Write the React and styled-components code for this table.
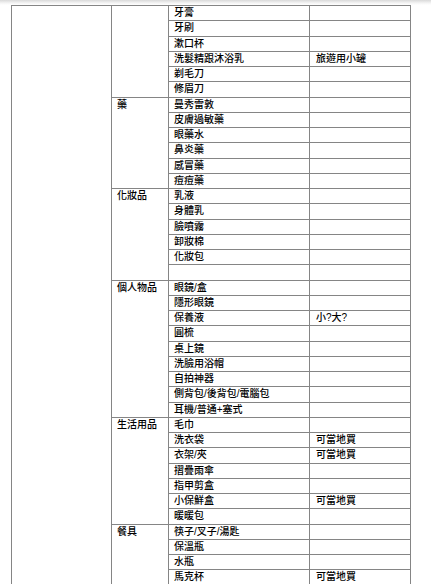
import React from "react"
import styled, { createGlobalStyle } from "styled-components"

const GlobalStyle = createGlobalStyle`
  html, body {
    margin: 0;
    padding: 0;
    background: #ffffff;
  }
  body {
    font-family: "Liberation Sans", "Noto Sans CJK TC", sans-serif;
    color: #000000;
    overflow: hidden;
  }
`

const Page = styled.div`
  width: 431px;
  height: 584px;
  overflow: hidden;
  background: #ffffff;
`

const TopShade = styled.div`
  height: 5px;
  background: linear-gradient(to bottom, #d9d9d9, #f4f4f4 60%, #ffffff);
`

const Sheet = styled.table`
  margin-left: 11px;
  width: 399px;
  table-layout: fixed;
  border-collapse: collapse;
  font-size: 10px;
  font-weight: 500;
`

const Row = styled.tr`
  height: 15.26px;
`

const Cell = styled.td`
  border: 1px solid #858585;
  padding: 0 0 0 ${props => props.$pad || 5}px;
  height: 14.26px;
  line-height: 14px;
  white-space: nowrap;
  overflow: hidden;
  vertical-align: ${props => (props.$top ? "top" : "middle")};
`

const groups = [
  {
    name: "",
    items: [
      ["牙膏"],
      ["牙刷"],
      ["漱口杯"],
      ["洗髮精跟沐浴乳", "旅遊用小罐"],
      ["剃毛刀"],
      ["修眉刀"]
    ]
  },
  {
    name: "藥",
    items: [["曼秀雷敦"], ["皮膚過敏藥"], ["眼藥水"], ["鼻炎藥"], ["感冒藥"], ["痘痘藥"]]
  },
  {
    name: "化妝品",
    items: [["乳液"], ["身體乳"], ["臉噴霧"], ["卸妝棉"], ["化妝包"], [""]]
  },
  {
    name: "個人物品",
    items: [
      ["眼鏡/盒"],
      ["隱形眼鏡"],
      ["保養液", "小?大?"],
      ["圓梳"],
      ["桌上鏡"],
      ["洗臉用浴帽"],
      ["自拍神器"],
      ["側背包/後背包/電腦包"],
      ["耳機/普通+塞式"]
    ]
  },
  {
    name: "生活用品",
    items: [
      ["毛巾"],
      ["洗衣袋", "可當地買"],
      ["衣架/夾", "可當地買"],
      ["摺疊雨傘"],
      ["指甲剪盒"],
      ["小保鮮盒", "可當地買"],
      ["暖暖包"]
    ]
  },
  {
    name: "餐具",
    items: [["筷子/叉子/湯匙"], ["保溫瓶"], ["水瓶"], ["馬克杯", "可當地買"], [""]]
  }
]

const total = groups.reduce((n, g) => n + g.items.length, 0)

const App = () => (
  <Page>
    <GlobalStyle />
    <TopShade />
    <Sheet>
      <colgroup>
        <col style={{ width: 100 }} />
        <col style={{ width: 57 }} />
        <col style={{ width: 141 }} />
        <col style={{ width: 101 }} />
      </colgroup>
      <tbody>
        {groups.map((g, gi) =>
          g.items.map(([item, note], i) => (
            <Row key={`${gi}-${i}`}>
              {gi === 0 && i === 0 && <Cell rowSpan={total} />}
              {i === 0 && (
                <Cell $top rowSpan={g.items.length}>
                  {g.name}
                </Cell>
              )}
              <Cell>{item}</Cell>
              <Cell $pad={6}>{note || ""}</Cell>
            </Row>
          ))
        )}
      </tbody>
    </Sheet>
  </Page>
)

export default App
